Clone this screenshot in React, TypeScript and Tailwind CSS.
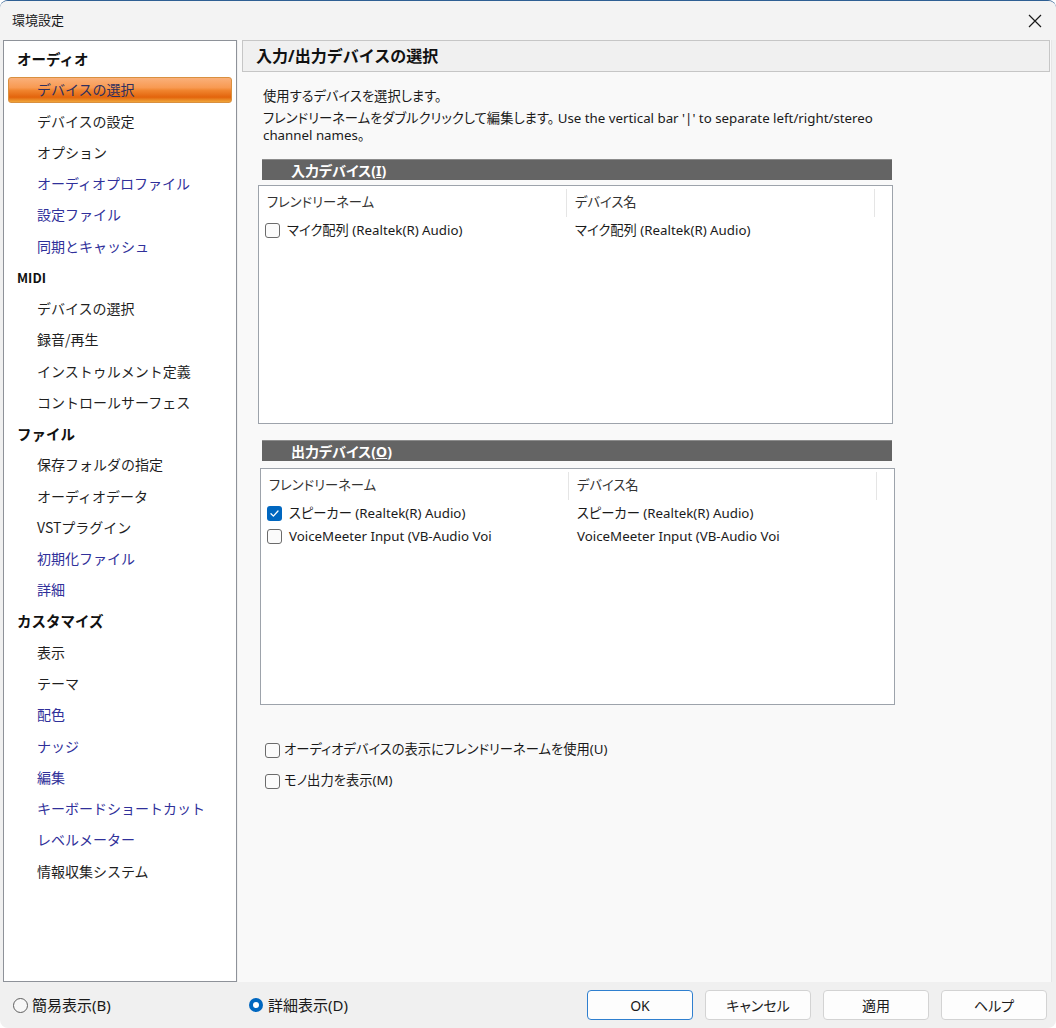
import React from 'react';

type NavItem = { label: string; kind: 'head' | 'sub' | 'item' | 'link'; selected?: boolean };

const nav: NavItem[] = [
  { label: 'オーディオ', kind: 'head' },
  { label: 'デバイスの選択', kind: 'item', selected: true },
  { label: 'デバイスの設定', kind: 'item' },
  { label: 'オプション', kind: 'item' },
  { label: 'オーディオプロファイル', kind: 'link' },
  { label: '設定ファイル', kind: 'link' },
  { label: '同期とキャッシュ', kind: 'link' },
  { label: 'MIDI', kind: 'sub' },
  { label: 'デバイスの選択', kind: 'item' },
  { label: '録音/再生', kind: 'item' },
  { label: 'インストゥルメント定義', kind: 'item' },
  { label: 'コントロールサーフェス', kind: 'item' },
  { label: 'ファイル', kind: 'head' },
  { label: '保存フォルダの指定', kind: 'item' },
  { label: 'オーディオデータ', kind: 'item' },
  { label: 'VSTプラグイン', kind: 'item' },
  { label: '初期化ファイル', kind: 'link' },
  { label: '詳細', kind: 'link' },
  { label: 'カスタマイズ', kind: 'head' },
  { label: '表示', kind: 'item' },
  { label: 'テーマ', kind: 'item' },
  { label: '配色', kind: 'link' },
  { label: 'ナッジ', kind: 'link' },
  { label: '編集', kind: 'link' },
  { label: 'キーボードショートカット', kind: 'link' },
  { label: 'レベルメーター', kind: 'link' },
  { label: '情報収集システム', kind: 'item' },
];

function Checkbox({ checked = false }: { checked?: boolean }) {
  if (checked) {
    return (
      <span className="flex h-[15px] w-[15px] shrink-0 items-center justify-center rounded-[3px] bg-[#0067c0]">
        <svg width="11" height="11" viewBox="0 0 11 11" fill="none">
          <path d="M2 5.8 L4.4 8.1 L9 3" stroke="white" strokeWidth="1.3" strokeLinecap="round" strokeLinejoin="round" />
        </svg>
      </span>
    );
  }
  return <span className="block h-[15px] w-[15px] shrink-0 rounded-[3px] border border-[#6b6b6b] bg-[#fbfbfb]"></span>;
}

function SectionBar({ children }: { children: React.ReactNode }) {
  return (
    <div className="flex h-[21px] w-[630px] items-center border-t border-[#8c8c8c] bg-[#646464] pl-[29px] text-[14px] font-bold text-white">
      {children}
    </div>
  );
}

function DeviceList({ rows, height }: { rows: { name: string; device: string; checked?: boolean }[]; height: string }) {
  return (
    <div className={`${height} w-[635px] border border-[#9da3ab] bg-white`}>
      <div className="flex h-[33px] items-center text-[13.3px] text-[#333]">
        <div className="w-[307px] pl-[8px]">フレンドリーネーム</div>
        <div className="h-[28px] w-px bg-[#e5e5e5]"></div>
        <div className="w-[307px] pl-[8px]">デバイス名</div>
        <div className="h-[28px] w-px bg-[#e5e5e5]"></div>
      </div>
      {rows.map(r => (
        <div key={r.name} className="flex h-[23px] items-center text-[13.3px] text-[#1a1a1a]">
          <div className="flex w-[308px] items-center gap-[7px] pl-[6px]">
            <Checkbox checked={r.checked} />
            <span className="whitespace-nowrap">{r.name}</span>
          </div>
          <div className="whitespace-nowrap pl-[8px]">{r.device}</div>
        </div>
      ))}
    </div>
  );
}

function Button({ children, primary = false }: { children: React.ReactNode; primary?: boolean }) {
  return (
    <button
      type="button"
      className={
        primary
          ? 'flex h-[30px] w-[106px] items-center justify-center rounded-[4px] border border-[#2f7fcf] bg-[#fdfdfd] text-[14px] text-[#1a1a1a]'
          : 'flex h-[30px] w-[106px] items-center justify-center rounded-[4px] border border-[#d3d3d3] bg-[#fdfdfd] text-[14px] text-[#1a1a1a]'
      }
    >
      {children}
    </button>
  );
}

export default function App() {
  return (
    <div className="flex h-[1028px] w-[1056px] flex-col overflow-hidden rounded-lg border-t border-[#2e5f93] bg-[#f0f0f0] font-['Noto_Sans','Noto_Sans_CJK_JP',sans-serif] text-[#1a1a1a]">
      {/* title bar */}
      <div className="flex h-[39px] shrink-0 items-center justify-between bg-[#f3f3f3] pl-[12px] pr-[13px]">
        <span className="text-[13px] text-[#1a1a1a]">環境設定</span>
        <svg width="16" height="16" viewBox="0 0 16 16" fill="none">
          <path d="M2 2 L14 14 M14 2 L2 14" stroke="#1a1a1a" strokeWidth="1.2" />
        </svg>
      </div>

      {/* body */}
      <div className="flex h-[942px] shrink-0">
        <div className="ml-[3px] w-[234px] shrink-0 border border-[#8e9299] bg-white pt-[2px] font-['Noto_Sans_CJK_JP',sans-serif]">
          {nav.map((n, i) => {
            if (n.kind === 'head') {
              return (
                <div key={i} className="flex h-[31.25px] items-center pl-[13px] text-[14.5px] font-bold text-[#111]">
                  {n.label}
                </div>
              );
            }
            if (n.kind === 'sub') {
              return (
                <div key={i} className="flex h-[31.25px] items-center pl-[13px] text-[13px] font-bold text-[#111]">
                  {n.label}
                </div>
              );
            }
            if (n.selected) {
              return (
                <div key={i} className="flex h-[31.25px] items-center px-[4px]">
                  <div className="flex h-[26px] w-full items-center rounded-[3px] border border-[#d9903f] bg-[linear-gradient(to_bottom,#fab07a_0%,#f89a52_40%,#f0842e_52%,#e3640c_80%,#f0a63a_100%)] pl-[28px] text-[14px] text-[#2f2f5f]">
                    {n.label}
                  </div>
                </div>
              );
            }
            return (
              <div
                key={i}
                className={
                  n.kind === 'link'
                    ? 'flex h-[31.25px] items-center pl-[33px] text-[14px] text-[#30309a]'
                    : 'flex h-[31.25px] items-center pl-[33px] text-[14px] text-[#1f1f1f]'
                }
              >
                {n.label}
              </div>
            );
          })}
        </div>

        <div className="ml-px w-[814px] shrink-0 border-r border-[#e6e6e6] bg-[#f9f9f9] [font-feature-settings:'palt']">
          <div className="ml-[4px] mr-px flex h-[32px] items-center border border-[#c6c6c6] bg-[#f0f0f0] pl-[13px] text-[16px] font-bold text-[#111] [font-feature-settings:normal]">
            入力/出力デバイスの選択
          </div>

          <div className="pl-[25px] pt-[15px] text-[13.3px] text-[#1a1a1a]">
            <div className="leading-[18px]">使用するデバイスを選択します。</div>
            <div className="mt-[5px] leading-[17px]">
              フレンドリーネームをダブルクリックして編集します。 Use the vertical bar '|' to separate left/right/stereo
              <br />
              channel names。
            </div>
          </div>

          <div className="mt-[15px] pl-[24px]">
            <SectionBar>
              入力デバイス(<span className="underline">I</span>)
            </SectionBar>
          </div>
          <div className="mt-[5px] pl-[20px]">
            <DeviceList height="h-[239px]" rows={[{ name: 'マイク配列 (Realtek(R) Audio)', device: 'マイク配列 (Realtek(R) Audio)' }]} />
          </div>

          <div className="mt-[16px] pl-[24px]">
            <SectionBar>
              出力デバイス(<span className="underline">O</span>)
            </SectionBar>
          </div>
          <div className="mt-[7px] pl-[22px]">
            <DeviceList
              height="h-[237px]"
              rows={[
                { name: 'スピーカー (Realtek(R) Audio)', device: 'スピーカー (Realtek(R) Audio)', checked: true },
                { name: 'VoiceMeeter Input (VB-Audio Voi', device: 'VoiceMeeter Input (VB-Audio Voi' },
              ]}
            />
          </div>

          <div className="mt-[37px] flex flex-col gap-[15px] pl-[27px] text-[13.3px] text-[#1a1a1a]">
            <div className="flex h-[16px] items-center gap-[4px]">
              <Checkbox />
              <span>オーディオデバイスの表示にフレンドリーネームを使用(U)</span>
            </div>
            <div className="flex h-[16px] items-center gap-[4px]">
              <Checkbox />
              <span>モノ出力を表示(M)</span>
            </div>
          </div>
        </div>
      </div>

      {/* bottom bar */}
      <div className="flex h-[46px] shrink-0 items-center pl-[13px] pr-[9px] text-[15px] [font-feature-settings:'palt']">
        <div className="flex w-[236px] items-center gap-[4px]">
          <span className="block h-[15px] w-[15px] rounded-full border border-[#5f5f5f] bg-[#f7f7f7]"></span>
          <span>簡易表示(B)</span>
        </div>
        <div className="flex items-center gap-[5px]">
          <span className="flex h-[14px] w-[14px] items-center justify-center rounded-full bg-[#0067c0]">
            <span className="block h-[6px] w-[6px] rounded-full bg-white"></span>
          </span>
          <span>詳細表示(D)</span>
        </div>
        <div className="ml-auto flex gap-[12px]">
          <Button primary>OK</Button>
          <Button>キャンセル</Button>
          <Button>適用</Button>
          <Button>ヘルプ</Button>
        </div>
      </div>
    </div>
  );
}
